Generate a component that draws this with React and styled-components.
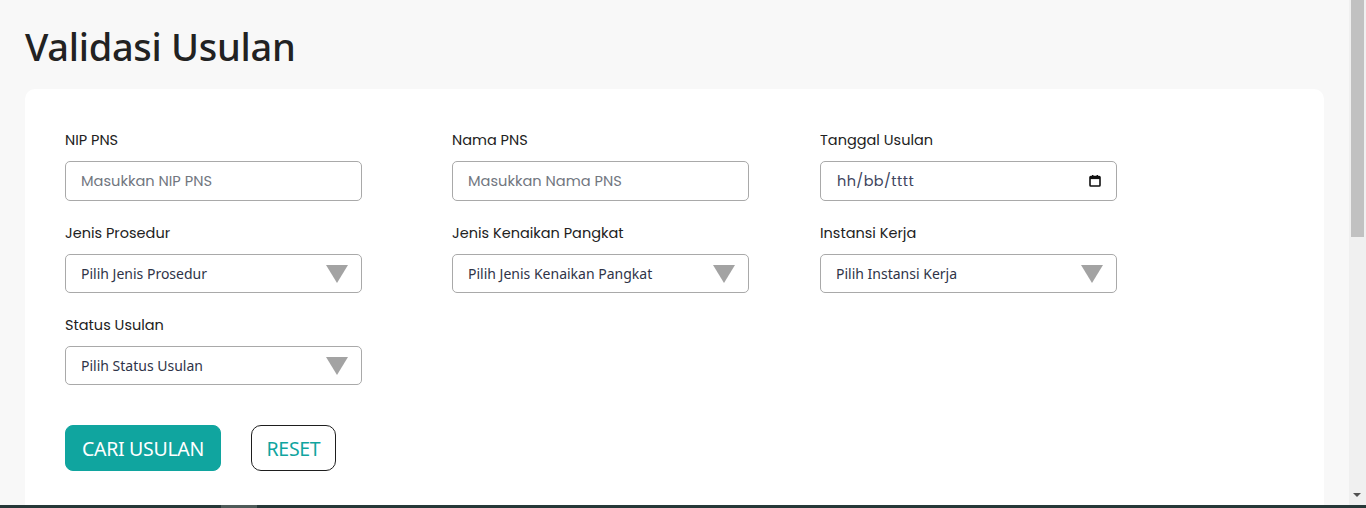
import React from "react";
import styled, { createGlobalStyle } from "styled-components";

const GlobalStyle = createGlobalStyle`
  html, body { margin: 0; padding: 0; }
  body {
    background: #f8f8f8;
    font-family: "Noto Sans", "Open Sans", sans-serif;
    color: #212529;
  }
  * { box-sizing: border-box; }
`;

const Page = styled.main`
  padding: 0 42px 0 25px;
  min-height: 1040px;
`;

const Title = styled.h1`
  margin: 0;
  padding: 22px 0 18px 0;
  font-family: "Noto Sans", sans-serif;
  font-weight: 500;
  font-size: 38px;
  line-height: 49px;
  color: #222;
  letter-spacing: -0.3px;
`;

const Card = styled.section`
  background: #fff;
  border-radius: 10px;
  padding: 41px 40px 60px 40px;
  min-height: 900px;
`;

const Grid = styled.div`
  display: grid;
  grid-template-columns: 387px 368px 297px;
  row-gap: 22px;
`;

const Field = styled.div`
  display: flex;
  flex-direction: column;
  width: 297px;
`;

const Label = styled.label`
  font-family: "Poppins", "Lato", sans-serif;
  font-size: 14.5px;
  line-height: 20px;
  color: #222;
  margin-bottom: 11px;
`;

const TextInput = styled.input`
  height: 40px;
  width: 100%;
  border: 1px solid #a9a9a9;
  border-radius: 5px;
  padding: 0 15px;
  font-family: "Poppins", "Lato", sans-serif;
  font-size: 14.6px;
  color: #333;
  outline: none;
  &::placeholder { color: #72777f; }
`;

const DateBox = styled.div`
  height: 40px;
  width: 100%;
  border: 1px solid #a9a9a9;
  border-radius: 5px;
  padding: 0 15px 0 16px;
  display: flex;
  align-items: center;
  justify-content: space-between;
  font-family: "Poppins", "Lato", sans-serif;
  font-size: 14.5px;
  letter-spacing: 0.4px;
  color: #40455e;
`;

const SelectWrap = styled.div`
  position: relative;
  height: 39px;
  width: 100%;
`;

const Select = styled.select`
  appearance: none;
  -webkit-appearance: none;
  height: 39px;
  width: 100%;
  border: 1px solid #a9a9a9;
  border-radius: 5px;
  padding: 0 40px 0 15px;
  background: #fff;
  font-family: "Noto Sans", "Open Sans", sans-serif;
  font-size: 14px;
  color: #2f3448;
  outline: none;
`;

const Caret = styled.span`
  position: absolute;
  right: 14px;
  top: 11px;
  width: 0;
  height: 0;
  border-left: 11px solid transparent;
  border-right: 11px solid transparent;
  border-top: 18px solid #a3a3a3;
  pointer-events: none;
`;

const Actions = styled.div`
  display: flex;
  gap: 30px;
  margin-top: 40px;
`;

const Button = styled.button`
  height: 46px;
  padding: 0 ${(p) => (p.$primary ? "16px" : "14.5px")};
  border-radius: ${(p) => (p.$primary ? "8px" : "10px")};
  border: 1px solid ${(p) => (p.$primary ? "#10a59f" : "#1e1e1e")};
  background: ${(p) => (p.$primary ? "#10a59f" : "#fff")};
  color: ${(p) => (p.$primary ? "#fff" : "#10a59f")};
  font-family: "Noto Sans", "Open Sans", sans-serif;
  font-size: 19.5px;
  letter-spacing: -0.3px;
  cursor: pointer;
`;

const BottomBar = styled.div`
  position: fixed;
  left: 0;
  right: 0;
  bottom: 0;
  height: 3px;
  background: #263838;
`;

const BarThumb = styled.div`
  position: absolute;
  left: 221px;
  width: 36px;
  top: 0;
  bottom: 0;
  background: #4e5b59;
`;

const ScrollTrack = styled.div`
  position: fixed;
  top: 0;
  right: 0;
  bottom: 3px;
  width: 17px;
  background: #f0f0f0;
`;

const ScrollThumb = styled.div`
  position: absolute;
  top: 0;
  left: 2px;
  right: 2px;
  height: 237px;
  background: #c1c1c1;
`;

const ScrollArrow = styled.div`
  position: absolute;
  bottom: 8px;
  left: 4px;
  width: 0;
  height: 0;
  border-left: 4px solid transparent;
  border-right: 4px solid transparent;
  border-top: 4px solid #505050;
`;

const CalendarIcon = () => (
  <svg width="12" height="12" viewBox="0 0 12 12" aria-hidden="true">
    <rect x="1" y="1.5" width="10" height="9.5" rx="0.8" fill="none" stroke="#111" strokeWidth="1.6" />
    <rect x="1" y="1.5" width="10" height="2.6" fill="#111" />
    <rect x="3" y="0" width="1.4" height="2" fill="#111" />
    <rect x="7.6" y="0" width="1.4" height="2" fill="#111" />
  </svg>
);

const SelectField = ({ label, placeholder }) => (
  <Field>
    <Label>{label}</Label>
    <SelectWrap>
      <Select defaultValue="">
        <option value="">{placeholder}</option>
      </Select>
      <Caret />
    </SelectWrap>
  </Field>
);

export default function App() {
  return (
    <>
      <GlobalStyle />
      <Page>
        <Title>Validasi Usulan</Title>
        <Card>
          <Grid>
            <Field>
              <Label>NIP PNS</Label>
              <TextInput placeholder="Masukkan NIP PNS" />
            </Field>
            <Field>
              <Label>Nama PNS</Label>
              <TextInput placeholder="Masukkan Nama PNS" />
            </Field>
            <Field>
              <Label>Tanggal Usulan</Label>
              <DateBox>
                <span>hh/bb/tttt</span>
                <CalendarIcon />
              </DateBox>
            </Field>
            <SelectField label="Jenis Prosedur" placeholder="Pilih Jenis Prosedur" />
            <SelectField label="Jenis Kenaikan Pangkat" placeholder="Pilih Jenis Kenaikan Pangkat" />
            <SelectField label="Instansi Kerja" placeholder="Pilih Instansi Kerja" />
            <SelectField label="Status Usulan" placeholder="Pilih Status Usulan" />
          </Grid>
          <Actions>
            <Button $primary>CARI USULAN</Button>
            <Button>RESET</Button>
          </Actions>
        </Card>
      </Page>
      <ScrollTrack>
        <ScrollThumb />
        <ScrollArrow />
      </ScrollTrack>
      <BottomBar>
        <BarThumb />
      </BottomBar>
    </>
  );
}
